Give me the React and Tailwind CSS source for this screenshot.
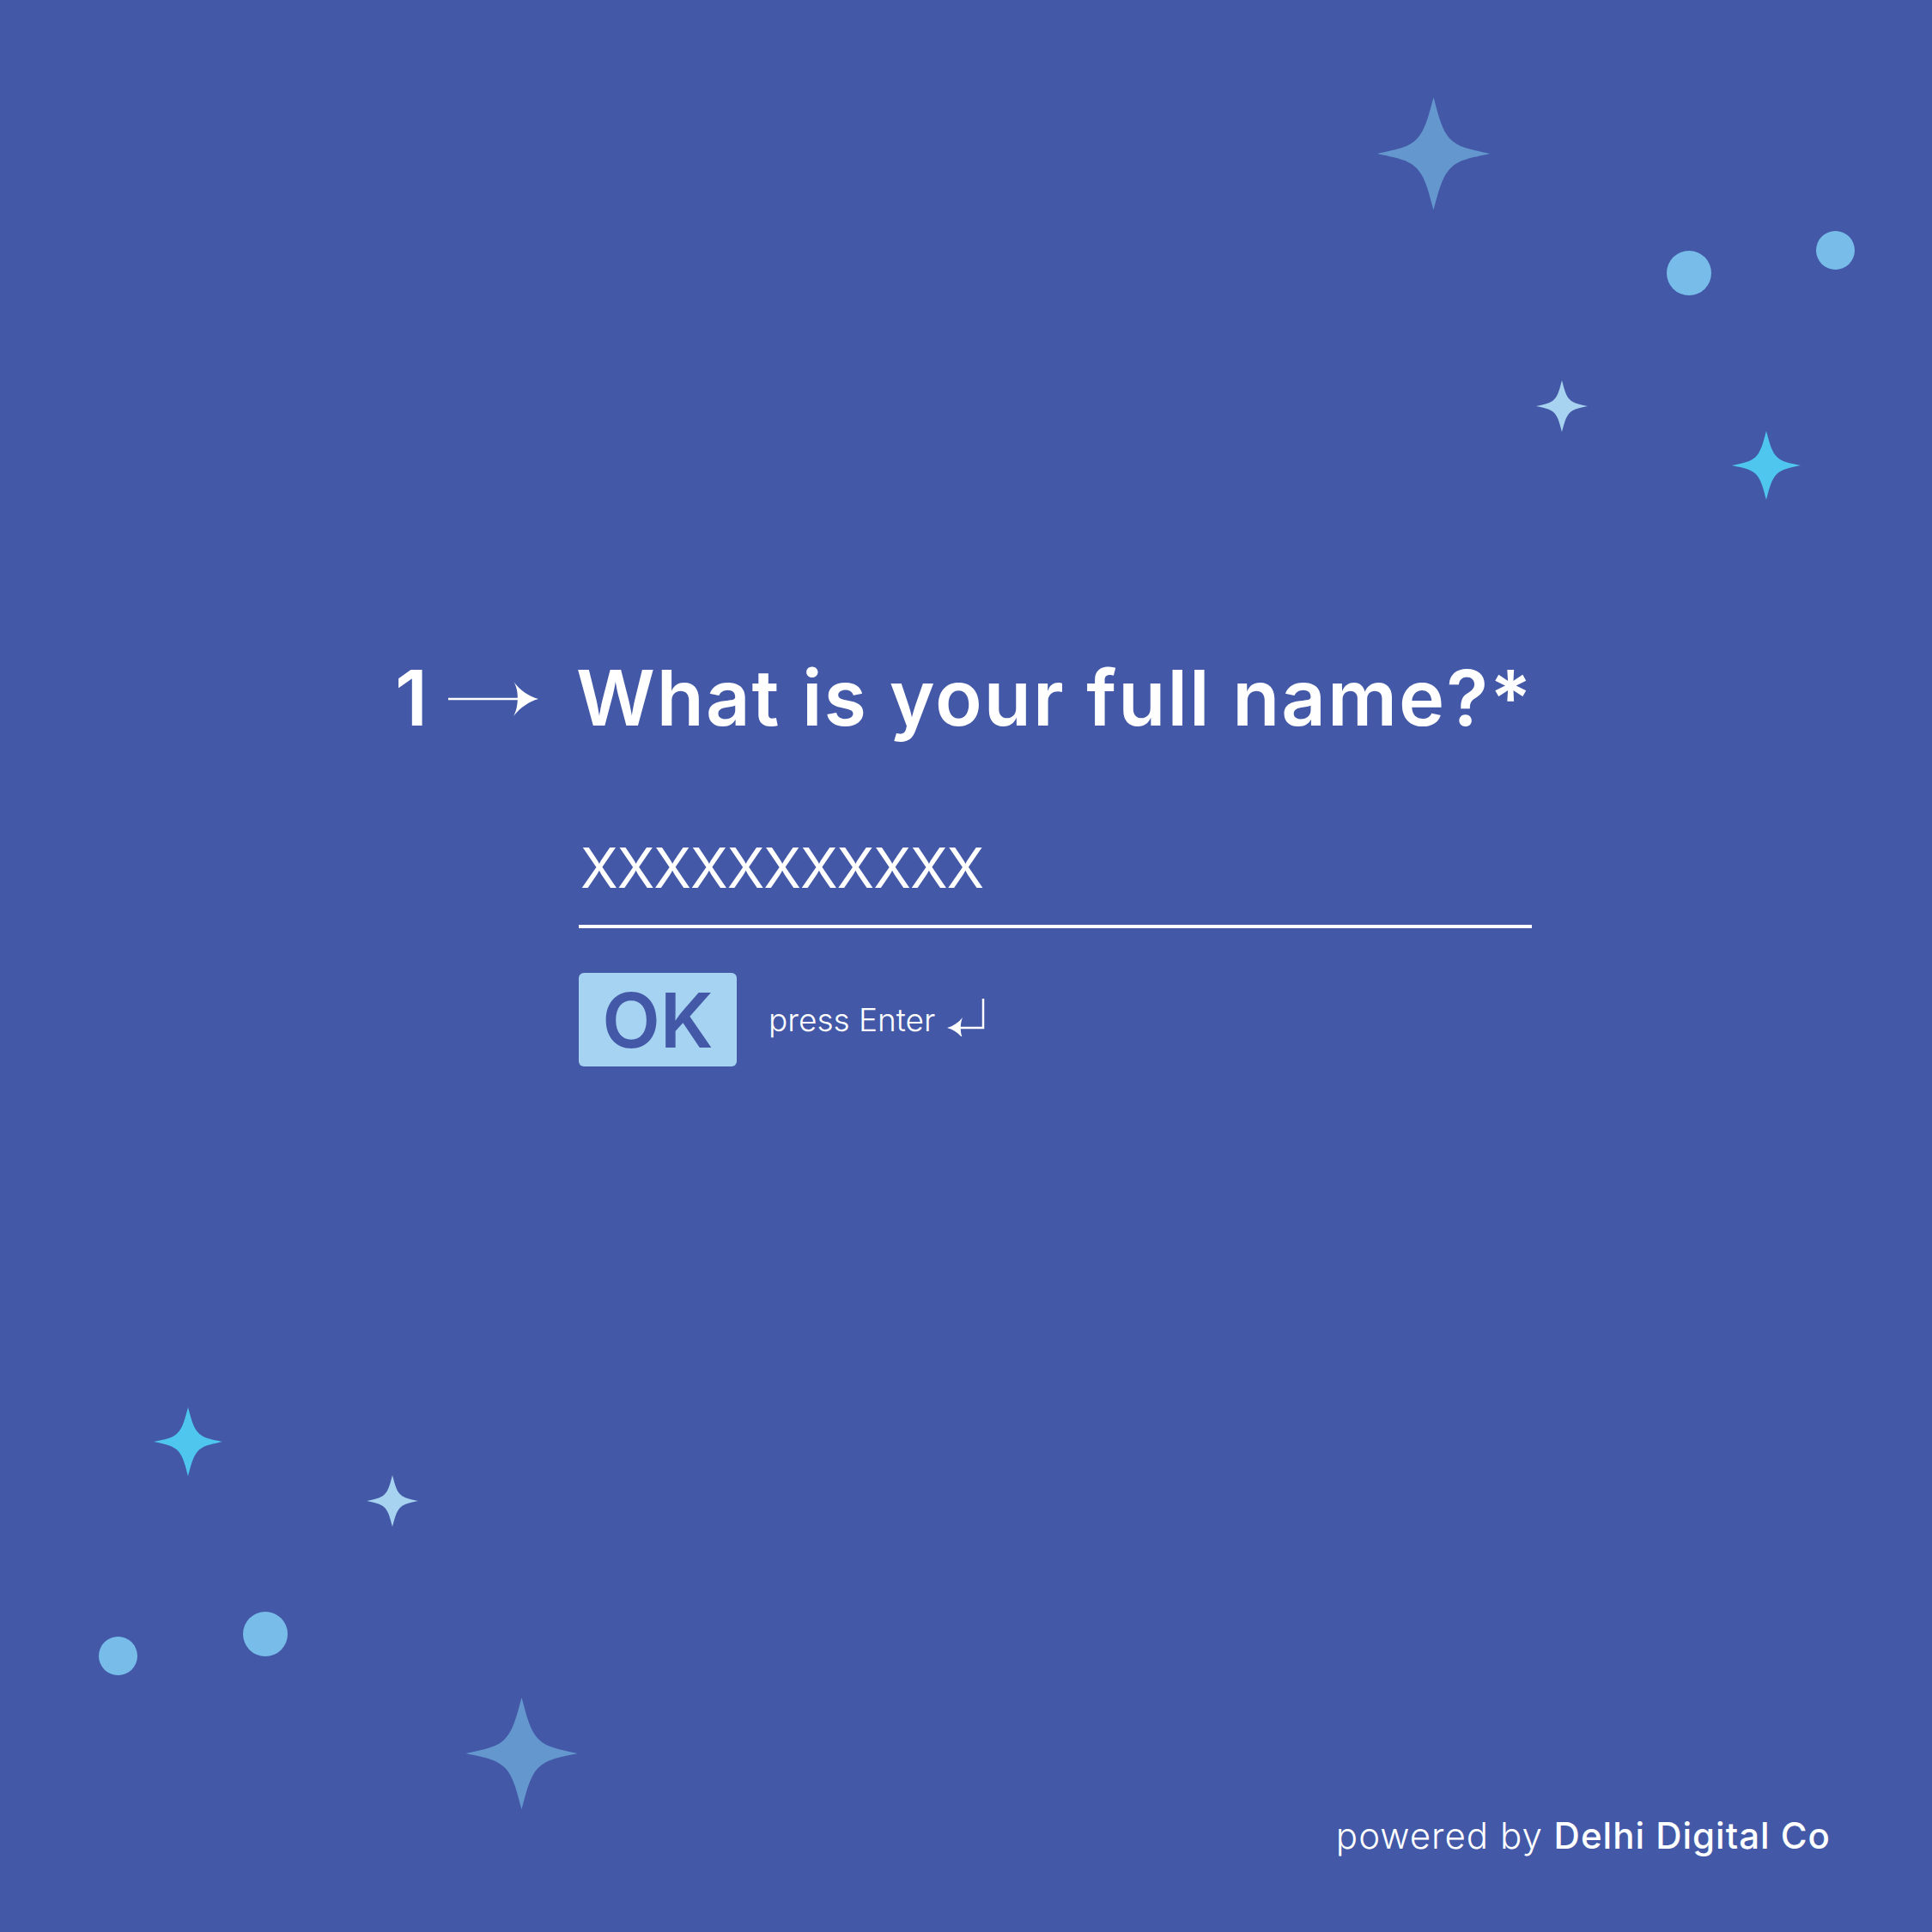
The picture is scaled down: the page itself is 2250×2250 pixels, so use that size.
import React from "react";

const SPARK =
  "M50 0 C54 14 57 30 66 38 C74 45 82 46 100 50 C82 54 74 55 66 62 C57 70 54 86 50 100 C46 86 43 70 34 62 C26 55 18 54 0 50 C18 46 26 45 34 38 C43 30 46 14 50 0 Z";

function Sparkle({ className, color }) {
  return (
    <svg viewBox="0 0 100 100" className={className}>
      <path d={SPARK} fill={color} />
    </svg>
  );
}

function Dot({ className }) {
  return <div className={"absolute rounded-full bg-[#78bde9] " + className} />;
}

// free-floating stars and dots on the background
function Decorations() {
  return (
    <>
      <Sparkle className="absolute left-[1604px] top-[113px] w-[131px] h-[132px]" color="#6597cf" />
      <Dot className="left-[1941px] top-[292px] w-[52px] h-[52px]" />
      <Dot className="left-[2115px] top-[269px] w-[45px] h-[45px]" />
      <Sparkle className="absolute left-[1789px] top-[443px] w-[60px] h-[60px]" color="#a8d3f0" />
      <Sparkle className="absolute left-[2017px] top-[502px] w-[80px] h-[80px]" color="#4fc6ee" />

      <Sparkle className="absolute left-[179px] top-[1639px] w-[80px] h-[80px]" color="#4fc6ee" />
      <Sparkle className="absolute left-[427px] top-[1718px] w-[60px] h-[60px]" color="#a8d3f0" />
      <Dot className="left-[115px] top-[1906px] w-[45px] h-[45px]" />
      <Dot className="left-[283px] top-[1877px] w-[52px] h-[52px]" />
      <Sparkle className="absolute left-[542px] top-[1977px] w-[131px] h-[130px]" color="#6597cf" />
    </>
  );
}

export default function App() {
  return (
    <div className="relative w-[2250px] h-[2250px] overflow-hidden bg-[#4359a7] text-white font-['Inter','Liberation_Sans',sans-serif] flex flex-col">
      <Decorations />

      <div className="relative pt-[768px] pl-[460px]">
        {/* question */}
        <div className="flex items-center">
          <span className="text-[90px] leading-none font-semibold w-[62px]">1</span>
          <svg viewBox="0 0 105 40" className="w-[105px] h-[40px] mt-[2px]">
            <line x1="0" y1="20" x2="86" y2="20" stroke="#fff" strokeWidth="2.5" />
            <path d="M105 20 C94 23 84 30 76 40 C82 31 83 9 76 0 C84 10 94 17 105 20 Z" fill="#fff" />
          </svg>
          <h1 className="ml-[44px] text-[90px] leading-none font-semibold tracking-[2px]">
            What is your full name?*
          </h1>
        </div>

        {/* answer */}
        <div className="ml-[214px] w-[1110px] mt-[121px]">
          <div className="text-[64px] leading-none font-normal tracking-[-1px] pl-[2px]">XXXXXXXXXXX</div>
          <div className="mt-[34px] h-[4px] bg-white" />
          <div className="mt-[52px] flex items-center">
            <div className="w-[184px] h-[109px] rounded-[6px] bg-[#a6d3f1] flex items-center justify-center">
              <span className="text-[88px] leading-none font-semibold text-[#4359a7]">OK</span>
            </div>
            <span className="ml-[37px] text-[37px] font-light">press Enter</span>
            <svg viewBox="0 0 46 46" className="ml-[14px] w-[46px] h-[46px] mt-[-8px]">
              <path d="M42 2 V36 H12" stroke="#fff" strokeWidth="2.5" fill="none" />
              <path d="M0 36 C7 34 13 30 18 24 C15 31 15 41 18 48 C13 42 7 38 0 36 Z" fill="#fff" />
            </svg>
          </div>
        </div>
      </div>

      {/* footer */}
      <div className="relative mt-auto mb-[91px] pr-[118px] flex justify-end text-[42px] leading-none tracking-[1px]">
        <span className="font-light">powered by&nbsp;</span>
        <span className="font-medium">Delhi Digital Co</span>
      </div>
    </div>
  );
}
